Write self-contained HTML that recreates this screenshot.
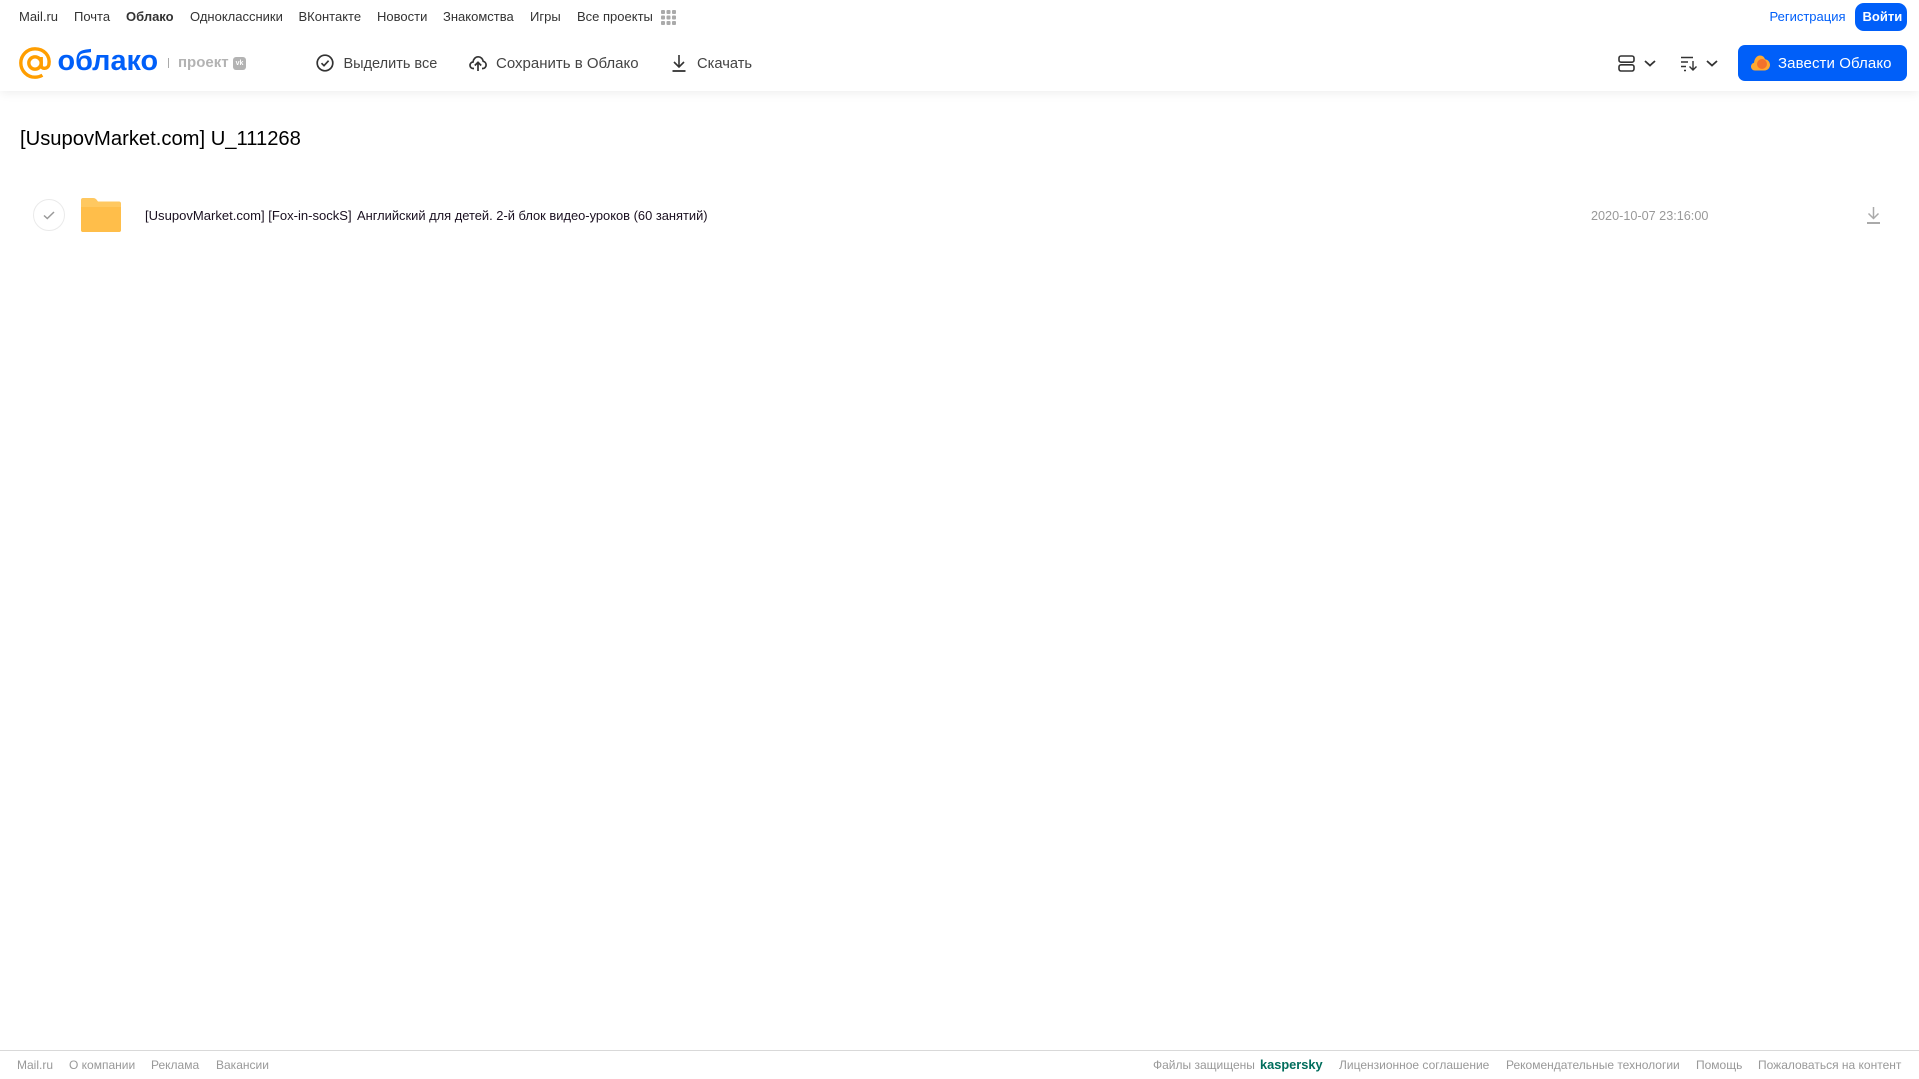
<!DOCTYPE html>
<html lang="ru"><head><meta charset="utf-8"><title>Облако</title>
<style>
html,body{margin:0;padding:0;background:#fff;width:1919px;height:1079px;overflow:hidden;font-family:"Liberation Sans","DejaVu Sans",sans-serif}
.t{position:absolute;white-space:nowrap;line-height:20px;height:20px}
.n{top:7px;font-size:13px;color:#333}
.b{top:54px;font-size:15px;color:#444}
.f{top:1055px;font-size:12px;color:#999}
svg{position:absolute;overflow:visible}
</style></head><body>
<div style="position:absolute;left:0;top:0;width:1919px;height:91px;background:#fff;box-shadow:0 2px 10px rgba(0,0,0,.07)"></div>

<span class="t n" style="left:19px">Mail.ru</span>
<span class="t n" style="left:74px">Почта</span>
<span class="t n" style="left:126px;font-weight:bold">Облако</span>
<span class="t n" style="left:190px">Одноклассники</span>
<span class="t n" style="left:298.500px">ВКонтакте</span>
<span class="t n" style="left:377px">Новости</span>
<span class="t n" style="left:443px">Знакомства</span>
<span class="t n" style="left:530px">Игры</span>
<span class="t n" style="left:577px">Все проекты</span>
<svg style="left:661px;top:10px" width="15" height="15" fill="#aaa"><rect width="4" height="4" rx="1"/><rect x="5.500" width="4" height="4" rx="1"/><rect x="11" width="4" height="4" rx="1"/><rect y="5.500" width="4" height="4" rx="1"/><rect x="5.500" y="5.500" width="4" height="4" rx="1"/><rect x="11" y="5.500" width="4" height="4" rx="1"/><rect y="11" width="4" height="4" rx="1"/><rect x="5.500" y="11" width="4" height="4" rx="1"/><rect x="11" y="11" width="4" height="4" rx="1"/></svg>

<span class="t n" style="left:1769.500px;color:#005ff9">Регистрация</span>
<div style="position:absolute;left:1855px;top:3px;width:52px;height:28px;background:#005ff9;border-radius:9px"></div>
<span class="t n" style="left:1862.500px;color:#fff;font-weight:bold">Войти</span>

<!-- logo -->
<svg style="left:19px;top:47px" width="32" height="32" viewBox="0 0 32 32" fill="none" stroke="#ff9e00" stroke-width="3.400"><circle cx="16" cy="16" r="6.200"/><path d="M22.200 10v8.200c0 4.400 6.800 4.200 7.700-.6C31.400 8.500 24.800 1.800 16 1.800 8.200 1.800 1.800 8.200 1.800 16S8.200 30.200 16 30.200c3 0 5.400-.8 7.400-2"/></svg>
<span class="t" style="left:57.500px;top:43px;height:36px;line-height:36px;font-size:28.800px;color:#005ff9;font-weight:bold">облако</span>
<div style="position:absolute;left:168px;top:58px;width:1px;height:10px;background:#aaa"></div>
<span class="t" style="left:178px;top:53px;font-size:15px;font-weight:bold;color:#b3b3b3">проект</span>
<div style="position:absolute;left:233px;top:57px;width:13px;height:13px;background:#b3b3b3;border-radius:3px;color:#fff;font:bold 7px/13px 'Liberation Sans',sans-serif;text-align:center">vk</div>

<!-- toolbar -->
<svg style="left:316px;top:54px" width="18" height="18" fill="none" stroke="#333" stroke-width="1.700"><circle cx="9" cy="9" r="7.800"/><path d="M5.500 9.200l2.500 2.500 4.600-5"/></svg>
<span class="t b" style="left:343.500px;font-size:14.500px">Выделить все</span>
<svg style="left:469px;top:54px" width="18" height="18" viewBox="0 0 18 18" fill="none" stroke="#333" stroke-width="1.700"><path d="M5 14.500H4.200C2.300 14.500 1 13 1 11.300c0-1.800 1.300-3.100 3-3.300C4.400 5 6.500 2.800 9.200 2.800c2.600 0 4.600 2 5 4.500 1.700.3 2.900 1.900 2.900 3.700 0 1.900-1.400 3.500-3.200 3.500H13"/><path d="M9 17V8.500M5.800 11.500L9 8.300l3.200 3.200"/></svg>
<span class="t b" style="left:496px">Сохранить в Облако</span>
<svg style="left:671px;top:54px" width="16" height="18" fill="none" stroke="#333" stroke-width="1.600"><path d="M8 1v11.500M3 8l5 5 5-5"/><path d="M1.500 17h13" stroke-width="1.800"/></svg>
<span class="t b" style="left:697px;font-size:14.700px">Скачать</span>

<!-- right toolbar -->
<svg style="left:1618px;top:55px" width="17" height="17" fill="none" stroke="#333" stroke-width="1.600"><rect x="1" y="1" width="15" height="6.200" rx="2"/><rect x="1" y="9.800" width="15" height="6.200" rx="2"/></svg>
<svg style="left:1644px;top:60px" width="12" height="7" fill="none" stroke="#333" stroke-width="1.800"><path d="M1 1l5 4.500L11 1"/></svg>
<svg style="left:1681px;top:56px" width="17" height="15" fill="none" stroke="#333" stroke-width="1.400"><path d="M0 1.500h12M0 6h7M0 10.500h5M3 14.500h2"/><path d="M12 5v9M8.500 10.500L12 14l3.500-3.500"/></svg>
<svg style="left:1706px;top:60px" width="12" height="7" fill="none" stroke="#333" stroke-width="1.800"><path d="M1 1l5 4.500L11 1"/></svg>
<div style="position:absolute;left:1738px;top:45px;width:169px;height:36px;background:#005ff9;border-radius:7px"></div>
<svg style="left:1751px;top:55px" width="19" height="16" viewBox="0 0 19 16"><path d="M4 15.500C1.800 15.500 0 13.800 0 11.500 0 9.600 1.300 8.200 3 7.700 3.500 3.400 6 .5 9 .5c2.500 0 4.300 1.500 5 3.700 2.800.3 5 2.700 5 5.700 0 3.100-2.400 5.600-5.500 5.600z" fill="#ffa930"/><circle cx="11" cy="9" r="5" fill="#f3722c"/></svg>
<span class="t b" style="left:1778px;color:#fff;letter-spacing:.1px">Завести Облако</span>

<!-- content -->
<span class="t" style="left:20px;top:124.500px;height:28px;line-height:28px;font-size:20.200px;color:#000">[UsupovMarket.com] U_111268</span>
<div style="position:absolute;left:33px;top:199px;width:30px;height:30px;border:1px solid #eaeaea;border-radius:50%"></div>
<svg style="left:43px;top:211px" width="12" height="9" fill="none" stroke="#999" stroke-width="1.500"><path d="M1 4.500l3.300 3L11 1"/></svg>
<svg style="left:81px;top:198px" width="40" height="34" viewBox="0 0 40 34"><path d="M2 0h10c2 0 3 .8 4 2.200L17 3.500h21c1.200 0 2 .8 2 2V32c0 1.200-.8 2-2 2H2c-1.200 0-2-.8-2-2V2C0 .8.800 0 2 0z" fill="#ffc860"/><path d="M0 9h40v23c0 1.200-.8 2-2 2H2c-1.200 0-2-.8-2-2z" fill="#ffbe4a"/></svg>
<span class="t" style="left:145px;top:206px;font-size:13.050px;color:#1a1020">[UsupovMarket.com] [Fox-in-sockS]</span>
<span class="t" style="left:357px;top:206px;font-size:12.900px;color:#1a1020">Английский для детей. 2-й блок видео-уроков (60 занятий)</span>
<span class="t" style="left:1591px;top:206px;font-size:12.650px;color:#999">2020-10-07 23:16:00</span>
<svg style="left:1867px;top:207px" width="13" height="17" fill="none" stroke="#aaa" stroke-width="1.500"><path d="M6.500 0v11M1.500 6.500l5 5 5-5"/><path d="M0 16h13" stroke-width="2"/></svg>

<!-- footer -->
<div style="position:absolute;left:0;top:1050px;width:1919px;height:1px;background:#d9d9d9"></div>
<span class="t f" style="left:17px">Mail.ru</span>
<span class="t f" style="left:69px">О компании</span>
<span class="t f" style="left:151px">Реклама</span>
<span class="t f" style="left:216px">Вакансии</span>
<span class="t f" style="left:1153px">Файлы защищены</span>
<span class="t f" style="left:1260px;font-size:12.800px;font-weight:bold;color:#006d5c">kaspersky</span>
<span class="t f" style="left:1339px">Лицензионное соглашение</span>
<span class="t f" style="left:1506px">Рекомендательные технологии</span>
<span class="t f" style="left:1696px">Помощь</span>
<span class="t f" style="left:1758px">Пожаловаться на контент</span>
</body></html>
